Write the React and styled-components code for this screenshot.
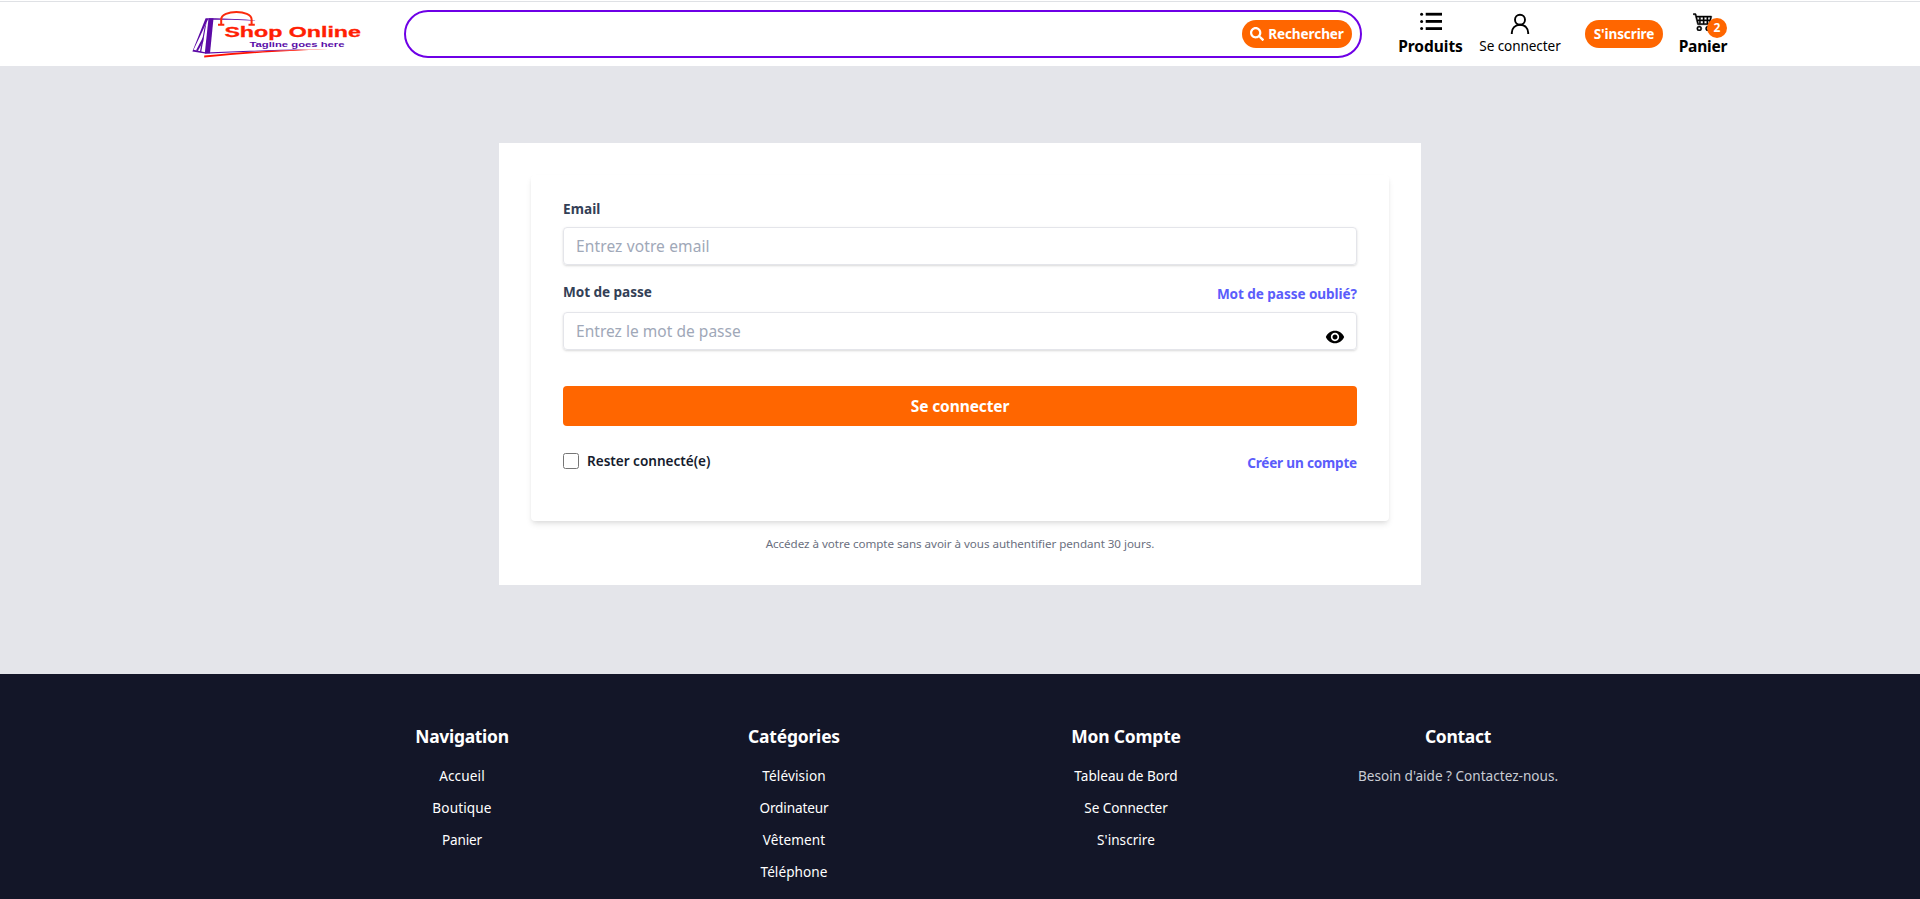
import React from 'react';
import styled, { createGlobalStyle } from 'styled-components';
import { FaSearch } from 'react-icons/fa';
import { MdVisibility } from 'react-icons/md';
import { BsCart4 } from 'react-icons/bs';

const color = {
  orange: '#ff6600',
  purple: '#6e00e6',
  link: '#5b5dfb',
  page: '#e4e5ea',
  footer: '#131628',
  line: '#e4e5ea',
};

const GlobalStyle = createGlobalStyle`
  *, *::before, *::after { box-sizing: border-box; }
  body {
    margin: 0;
    overflow: hidden;
    font-family: 'Noto Sans', 'Open Sans', sans-serif;
    color: #000;
    background: ${color.page};
  }
  a { color: inherit; text-decoration: none; }
  button, input { font-family: inherit; }
`;

const Page = styled.div`
  display: flex;
  flex-direction: column;
  height: 899px;
  overflow: hidden;
`;

/* Letter spacing is given in pixels through $track. */
const Label = styled.span`
  display: block;
  white-space: nowrap;
  letter-spacing: ${({ $track = 0 }) => $track}px;
`;

/* ---------- header ---------- */

const Header = styled.header`
  flex: none;
  height: 66px;
  padding-top: 1px;
  background: #fff;
`;

const HeaderBar = styled.div`
  display: flex;
  align-items: flex-start;
  height: 65px;
  padding: 8px 191px 0 192px;
  border-top: 1px solid #dfe1e5;
`;

const LogoLink = styled.a`
  flex: none;
  width: 172px;
  height: 48px;
  margin-right: 40px;

  svg { display: block; }
`;

const SearchBox = styled.form`
  flex: none;
  display: flex;
  align-items: center;
  width: 958px;
  height: 48px;
  padding: 0 8px 0 20px;
  border: 2px solid ${color.purple};
  border-radius: 24px;
`;

const SearchInput = styled.input`
  flex: 1;
  min-width: 0;
  border: 0;
  outline: 0;
  background: transparent;
  font-size: 16px;
`;

const Pill = styled.button`
  flex: none;
  display: flex;
  align-items: center;
  justify-content: center;
  gap: 4px;
  width: ${({ $width }) => $width}px;
  height: 28px;
  padding: 0;
  border: 0;
  border-radius: 14px;
  background: ${color.orange};
  color: #fff;
  font-size: 13.58px;
  font-weight: 700;
  line-height: 28px;
`;

const Nav = styled.nav`
  display: flex;
  align-items: flex-start;
  padding-left: 35px;
`;

const NavItem = styled.a`
  flex: none;
  display: flex;
  flex-direction: column;
  align-items: center;
  width: ${({ $width }) => $width}px;
  margin-right: ${({ $gap = 0 }) => $gap}px;
`;

const NavIcon = styled.span`
  position: relative;
  display: flex;
  align-items: center;
  justify-content: center;
  width: 22px;
  height: 24px;
`;

const NavLabel = styled(Label)`
  font-size: ${({ $strong }) => ($strong ? 15.52 : 13.58)}px;
  font-weight: ${({ $strong }) => ($strong ? 700 : 400)};
  line-height: 24px;
`;

const SignUp = styled.div`
  margin: 10px 15px 0 0;
`;

const CartIcon = styled(BsCart4)`
  flex: none;
  margin-bottom: 2px;
  stroke: #000;
  stroke-width: 0.35px;
`;

const Badge = styled.span`
  position: absolute;
  left: 15px;
  top: 8px;
  width: 20px;
  height: 20px;
  border-radius: 50%;
  background: ${color.orange};
  color: #fff;
  font-size: 12px;
  font-weight: 700;
  line-height: 19px;
  text-align: center;
`;

/* ---------- sign-in card ---------- */

const Main = styled.main`
  flex: none;
  display: flex;
  justify-content: center;
  align-items: flex-start;
  height: 608px;
  padding-top: 77px;
  background: ${color.page};
`;

const Card = styled.section`
  width: 922px;
  height: 442px;
  padding: 32px;
  background: #fff;
`;

const SignInForm = styled.form`
  height: 346px;
  padding: 23px 32px 0;
  border-radius: 4px;
  background: #fff;
  box-shadow: 0 4px 6px -1px rgba(0, 0, 0, 0.1), 0 2px 4px -1px rgba(0, 0, 0, 0.06);
`;

const FieldHead = styled.div`
  display: flex;
  justify-content: space-between;
  align-items: flex-start;
  height: ${({ $height }) => $height}px;
`;

const FieldLabel = styled(Label).attrs({ as: 'label' })`
  color: #334056;
  font-size: 13.58px;
  font-weight: 700;
  line-height: 21px;
`;

const TextLink = styled(Label).attrs({ as: 'a' })`
  margin-top: 2px;
  color: ${color.link};
  font-size: 13.58px;
  font-weight: 700;
  line-height: 21px;
`;

const Field = styled.div`
  display: flex;
  height: 38px;
  margin-bottom: ${({ $after }) => $after}px;
  padding: 0 12px;
  border: 1px solid ${color.line};
  border-radius: 4px;
  box-shadow: 0 1px 3px rgba(0, 0, 0, 0.1), 0 1px 2px rgba(0, 0, 0, 0.06);

  svg { flex: none; margin-top: 14px; margin-right: -1px; }
`;

const FieldInput = styled.input`
  flex: 1;
  min-width: 0;
  height: 36px;
  padding: 0;
  border: 0;
  outline: 0;
  background: transparent;
  font-size: 15.52px;
  letter-spacing: ${({ $track }) => $track}px;

  &::placeholder { color: #a0a8b8; opacity: 1; }
`;

const Submit = styled.button`
  display: block;
  width: 100%;
  height: 40px;
  margin-bottom: 24px;
  padding: 0;
  border: 0;
  border-radius: 4px;
  background: ${color.orange};
  color: #fff;
  font-size: 15.52px;
  font-weight: 700;
  line-height: 40px;
`;

const Options = styled.div`
  display: flex;
  justify-content: space-between;
  align-items: flex-start;
`;

const Remember = styled.label`
  display: flex;
  align-items: flex-start;
  gap: 8px;
  color: #151b2d;
  font-size: 13.58px;
  font-weight: 600;
  line-height: 21px;
`;

const Checkbox = styled.input`
  width: 16px;
  height: 16px;
  margin: 3px 0 0;
`;

const Note = styled.p`
  margin: 14px 0 0;
  color: #6b7080;
  font-size: 11.64px;
  line-height: 18px;
  letter-spacing: -0.05px;
  text-align: center;
`;

/* ---------- footer ---------- */

const Footer = styled.footer`
  flex: 1;
  display: grid;
  grid-template-columns: repeat(4, 332px);
  justify-content: center;
  align-items: start;
  padding-top: 48px;
  background: ${color.footer};
  color: #fff;
`;

const FooterColumn = styled.div`
  display: flex;
  flex-direction: column;
  align-items: center;
  gap: 12px;
`;

const FooterTitle = styled(Label).attrs({ as: 'h3' })`
  margin: 0 0 4px;
  font-size: 17.46px;
  font-weight: 700;
  line-height: 28px;
`;

const FooterText = styled(Label)`
  color: ${({ $muted }) => ($muted ? '#c9ccd4' : '#fff')};
  font-size: 13.58px;
  line-height: 20px;
`;

/* ---------- drawings ---------- */

const LogoText = styled.text`
  font-family: 'Liberation Sans', sans-serif;
  font-weight: 700;
`;

function Logo() {
  return (
    <svg width="172" height="48" viewBox="192 10 172 48" aria-label="Shop Online">
      <g fill="#5c0aa6">
        <path d="M208.5 18.300h5l-3.500 35h-5.200z" />
        <path d="M208.5 18.300c20 .3 35 .8 49 2.400-18-.8-32-1-49-1z" />
        <path d="M205.600 18.300h3l-15 31.500 11.500 2.500v1.300l-12.700-2.200z" />
        <path d="M206.600 22l-5.400 30-1.300-.3 4.600-24z" />
        <path d="M203.600 36l-7.600 14.600 1.800.4 5.400-9.500z" />
        <path d="M205 52.600c35-1.400 65-2.800 105-3.300-35 1.500-70 2.800-105 4.500z" />
      </g>
      <path d="M204.200 55.600c35-3.400 75-6 124-6.100-45 1.100-82 4-124 8z" fill="#ff1200" />
      <g fill="none" stroke="#fb2a0c">
        <path d="M221.200 24.500v-5c0-10 30.400-10 30.400 0v5" strokeWidth="2" />
        <path d="M218 24.800h6.300M248.500 24.800h6.300" strokeWidth="2" />
      </g>
      <LogoText
        x="224.400"
        y="37.300"
        fontSize="14.300"
        textLength="136.500"
        lengthAdjust="spacingAndGlyphs"
        fill="#ff2003"
        stroke="#ff2003"
        strokeWidth="0.300"
      >
        Shop Online
      </LogoText>
      <LogoText x="249.500" y="46.700" fontSize="7.200" textLength="95" lengthAdjust="spacingAndGlyphs" fill="#5a0ca8">
        Tagline goes here
      </LogoText>
    </svg>
  );
}

function ListIcon() {
  return (
    <svg width="22" height="24" viewBox="0 0 22 24" fill="#000">
      {[4.2, 11.4, 18.6].map((y) => (
        <React.Fragment key={y}>
          <circle cx="1.600" cy={y} r="1.500" />
          <rect x="5.700" y={y - 1.4} width="16.300" height="2.800" />
        </React.Fragment>
      ))}
    </svg>
  );
}

function UserIcon() {
  return (
    <svg width="22" height="24" viewBox="0 0 22 24" fill="none" stroke="#000" strokeWidth="1.900">
      <circle cx="11" cy="9.800" r="5" />
      <path d="M2.800 24v-1.200c0-4.600 3.200-8 8.200-8s8.200 3.400 8.200 8V24" />
    </svg>
  );
}

const footerColumns = [
  {
    title: 'Navigation',
    track: -0.29,
    items: [['Accueil', 0.12], ['Boutique', 0.13], ['Panier', -0.18]],
  },
  {
    title: 'Catégories',
    track: -0.18,
    items: [['Télévision', 0.14], ['Ordinateur', -0.12], ['Vêtement', 0.09], ['Téléphone', 0.07]],
  },
  {
    title: 'Mon Compte',
    track: -0.16,
    items: [['Tableau de Bord', 0], ['Se Connecter', -0.1], ["S'inscrire", 0.03]],
  },
  {
    title: 'Contact',
    track: -0.27,
    muted: true,
    items: [["Besoin d'aide ? Contactez-nous.", 0]],
  },
];

export default function App() {
  return (
    <Page>
      <GlobalStyle />
      <Header>
        <HeaderBar>
          <LogoLink href="#"><Logo /></LogoLink>
          <SearchBox>
            <SearchInput aria-label="Rechercher" />
            <Pill type="button" $width={110}>
              <FaSearch size={14} />
              <Label $track={-0.11}>Rechercher</Label>
            </Pill>
          </SearchBox>
          <Nav>
            <NavItem href="#" $width={67} $gap={15}>
              <NavIcon><ListIcon /></NavIcon>
              <NavLabel $strong $track={-0.05}>Produits</NavLabel>
            </NavItem>
            <NavItem href="#" $width={82} $gap={24}>
              <NavIcon><UserIcon /></NavIcon>
              <NavLabel $track={-0.1}>Se connecter</NavLabel>
            </NavItem>
            <SignUp>
              <Pill type="button" $width={78}><Label $track={-0.13}>S'inscrire</Label></Pill>
            </SignUp>
            <NavItem href="#" $width={50}>
              <NavIcon>
                <CartIcon size={20} />
                <Badge>2</Badge>
              </NavIcon>
              <NavLabel $strong $track={-0.2}>Panier</NavLabel>
            </NavItem>
          </Nav>
        </HeaderBar>
      </Header>

      <Main>
        <Card>
          <SignInForm>
            <FieldHead $height={29}>
              <FieldLabel $track={0.05}>Email</FieldLabel>
            </FieldHead>
            <Field $after={16}>
              <FieldInput type="email" placeholder="Entrez votre email" $track={0.12} />
            </Field>
            <FieldHead $height={31}>
              <FieldLabel $track={-0.05}>Mot de passe</FieldLabel>
              <TextLink href="#" $track={-0.07}>Mot de passe oublié?</TextLink>
            </FieldHead>
            <Field $after={36}>
              <FieldInput type="password" placeholder="Entrez le mot de passe" $track={0.02} />
              <MdVisibility size={20} />
            </Field>
            <Submit type="button"><Label $track={-0.12}>Se connecter</Label></Submit>
            <Options>
              <Remember>
                <Checkbox type="checkbox" />
                <Label $track={-0.02}>Rester connecté(e)</Label>
              </Remember>
              <TextLink href="#" $track={-0.2}>Créer un compte</TextLink>
            </Options>
          </SignInForm>
          <Note>Accédez à votre compte sans avoir à vous authentifier pendant 30 jours.</Note>
        </Card>
      </Main>

      <Footer>
        {footerColumns.map((column) => (
          <FooterColumn key={column.title}>
            <FooterTitle $track={column.track}>{column.title}</FooterTitle>
            {column.items.map(([text, track]) => (
              <FooterText key={text} $track={track} $muted={column.muted}>{text}</FooterText>
            ))}
          </FooterColumn>
        ))}
      </Footer>
    </Page>
  );
}
